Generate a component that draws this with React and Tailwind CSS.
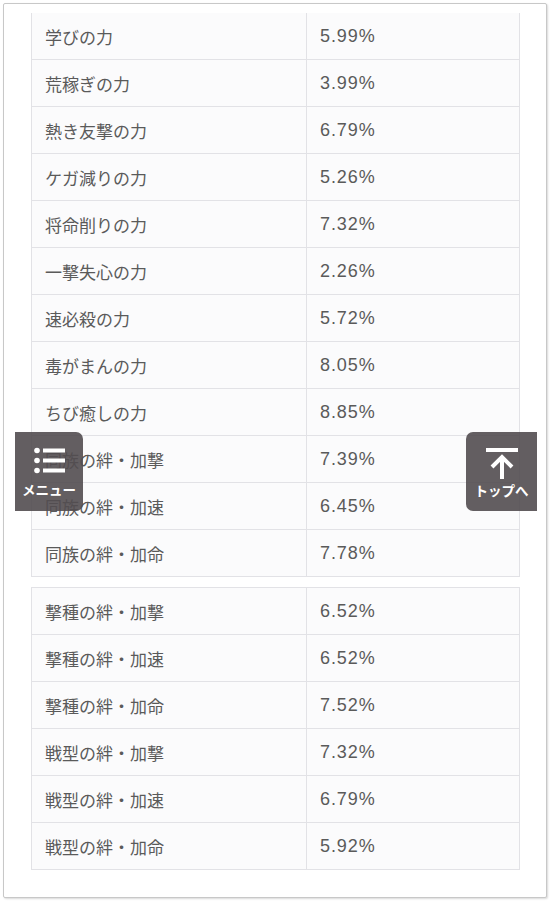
import React from 'react';

const GROUP_A = [
  ['学びの力', '5.99%'],
  ['荒稼ぎの力', '3.99%'],
  ['熱き友撃の力', '6.79%'],
  ['ケガ減りの力', '5.26%'],
  ['将命削りの力', '7.32%'],
  ['一撃失心の力', '2.26%'],
  ['速必殺の力', '5.72%'],
  ['毒がまんの力', '8.05%'],
  ['ちび癒しの力', '8.85%'],
  ['同族の絆・加撃', '7.39%'],
  ['同族の絆・加速', '6.45%'],
  ['同族の絆・加命', '7.78%'],
];

const GROUP_B = [
  ['撃種の絆・加撃', '6.52%'],
  ['撃種の絆・加速', '6.52%'],
  ['撃種の絆・加命', '7.52%'],
  ['戦型の絆・加撃', '7.32%'],
  ['戦型の絆・加速', '6.79%'],
  ['戦型の絆・加命', '5.92%'],
];

const RateTable = ({ rows, top }) => (
  <div className={`border-x border-[#e2e2e6] bg-[#fbfbfc] ${top ? 'border-t' : ''}`}>
    {rows.map(([name, rate]) => (
      <div key={name} className="grid grid-cols-[275px_1fr] h-[47px] border-b border-[#e2e2e6]">
        <div className="flex items-center pl-[13px] pt-[1px] border-r border-[#e2e2e6] text-[17px] text-[#5a5a5a] font-['Noto_Sans_CJK_JP',sans-serif]">
          {name}
        </div>
        <div className="flex items-center pl-[13px] pt-[1px] text-[18px] tracking-[0.9px] text-[#5a5a5a] font-['Liberation_Sans',Arial,sans-serif]">
          {rate}
        </div>
      </div>
    ))}
  </div>
);

export default function App() {
  return (
    <div className="relative w-[550px] h-[902px] bg-white p-[3px]">
      {/* outer frame */}
      <div className="h-[895px] w-[544px] border border-[#c8c8c8] rounded-[2px] shadow-[1px_1px_2px_rgba(0,0,0,0.15)] bg-white pt-[9px] pl-[27px] pr-[26px]">
        <RateTable rows={GROUP_A} />
        <div className="h-[10px]" />
        <RateTable rows={GROUP_B} top />
      </div>

      {/* menu button */}
      <div className="absolute left-[15px] top-[432px] w-[68px] h-[79px] rounded-r-[7px] bg-[#524c50]/90 flex flex-col items-center text-white">
        <svg width="34" height="28" viewBox="0 0 34 28" className="mt-[14px]" fill="#fff">
          <circle cx="5" cy="4.5" r="2.8" />
          <circle cx="5" cy="14.5" r="2.8" />
          <circle cx="5" cy="24.5" r="2.8" />
          <rect x="11" y="2.5" width="22" height="4" />
          <rect x="11" y="12.5" width="22" height="4" />
          <rect x="11" y="22.5" width="22" height="4" />
        </svg>
        <span className="mt-[9px] text-[13.5px] font-bold leading-none font-['Noto_Sans_CJK_JP',sans-serif]">メニュー</span>
      </div>

      {/* top button */}
      <div className="absolute left-[466px] top-[432px] w-[71px] h-[79px] rounded-l-[7px] bg-[#524c50]/90 flex flex-col items-center text-white">
        <svg width="34" height="32" viewBox="0 0 34 32" className="mt-[16px]" fill="none" stroke="#fff" strokeWidth="4">
          <line x1="1" y1="2" x2="33" y2="2" />
          <line x1="17" y1="9" x2="17" y2="31" />
          <polyline points="7,19 17,9 27,19" strokeLinejoin="miter" />
        </svg>
        <span className="mt-[4px] text-[13.5px] font-bold leading-none font-['Noto_Sans_CJK_JP',sans-serif]">トップへ</span>
      </div>
    </div>
  );
}
